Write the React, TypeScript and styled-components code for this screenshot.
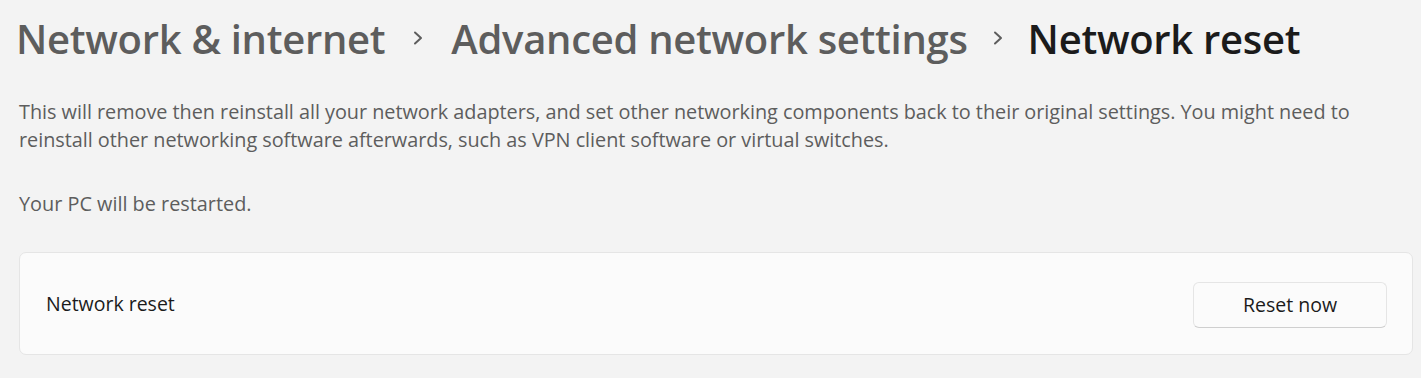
import React from "react";
import styled, { createGlobalStyle } from "styled-components";

const Global = createGlobalStyle`
  html, body { margin: 0; padding: 0; background: #f3f3f3; }
  body { font-family: "Open Sans", "Noto Sans", sans-serif; -webkit-font-smoothing: antialiased; }
`;

const Page = styled.div`
  width: 1421px;
  height: 378px;
  box-sizing: border-box;
  padding: 9px 8px 0 19px;
  background: #f3f3f3;
  display: flex;
  flex-direction: column;
`;

const Breadcrumb = styled.nav`
  display: flex;
  align-items: center;
  margin-left: -3px;
  height: 58px;
`;

const Crumb = styled.span<{ $current?: boolean }>`
  font-size: 40px;
  font-weight: 600;
  letter-spacing: -0.3px;
  color: ${(p) => (p.$current ? "#1b1b1b" : "#5d5d5d")};
  white-space: nowrap;
`;

const Sep = styled.span<{ $w: number }>`
  display: flex;
  align-items: center;
  justify-content: center;
  width: ${(p) => p.$w}px;
  height: 58px;
  color: #5d5d5d;
`;

const Description = styled.p`
  margin: 31px 0 0;
  font-size: 19.85px;
  letter-spacing: -0.03px;
  line-height: 28px;
  color: #5d5d5d;
  max-width: 1370px;
`;

const Note = styled.p`
  margin: 36px 0 0;
  font-size: 19.85px;
  line-height: 28px;
  color: #5d5d5d;
`;

const Card = styled.section`
  margin-top: 34px;
  width: 1394px;
  height: 103px;
  box-sizing: border-box;
  background: #fbfbfb;
  border: 1.5px solid #e5e5e5;
  border-radius: 7px;
  display: flex;
  align-items: center;
  justify-content: space-between;
  padding: 0 25px 0 26px;
`;

const CardLabel = styled.span`
  font-size: 19.5px;
  color: #1b1b1b;
`;

const Button = styled.button`
  width: 194px;
  height: 46px;
  box-sizing: border-box;
  background: #fbfbfb;
  border: 1.5px solid #e5e5e5;
  border-bottom-color: #cfcfcf;
  border-radius: 6px;
  font-family: inherit;
  font-size: 19.5px;
  color: #1b1b1b;
  margin-top: 2px;
`;

const Chevron = () => (
  <svg width="12" height="16" viewBox="0 0 12 16">
    <path d="M3 2.5 L9 8 L3 13.5" fill="none" stroke="currentColor" strokeWidth="2" strokeLinecap="round" strokeLinejoin="round" />
  </svg>
);

export default function App() {
  return (
    <>
      <Global />
      <Page>
        <Breadcrumb>
          <Crumb>Network &amp; internet</Crumb>
          <Sep $w={66}><Chevron /></Sep>
          <Crumb>Advanced network settings</Crumb>
          <Sep $w={60}><Chevron /></Sep>
          <Crumb $current>Network reset</Crumb>
        </Breadcrumb>
        <Description>
          This will remove then reinstall all your network adapters, and set other networking components back to their original settings. You might need to reinstall other networking software afterwards, such as VPN client software or virtual switches.
        </Description>
        <Note>Your PC will be restarted.</Note>
        <Card>
          <CardLabel>Network reset</CardLabel>
          <Button>Reset now</Button>
        </Card>
      </Page>
    </>
  );
}
